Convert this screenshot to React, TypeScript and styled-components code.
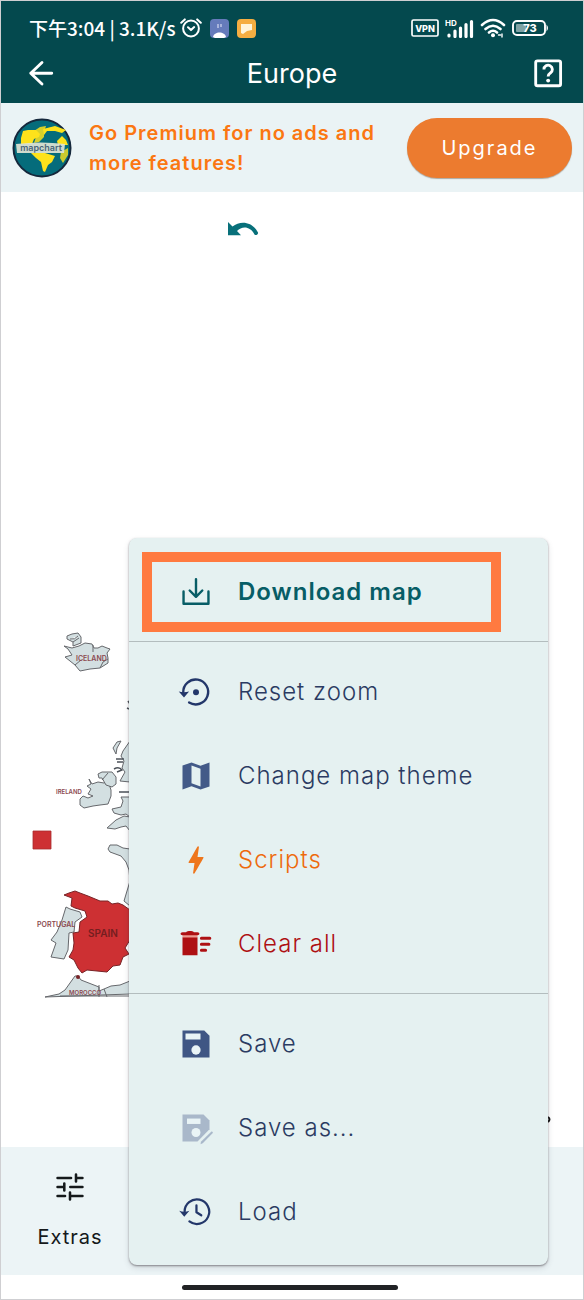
import React from "react";
import styled, { createGlobalStyle } from "styled-components";

const GlobalStyle = createGlobalStyle`
  *, *::before, *::after { box-sizing: border-box; }
  body {
    margin: 0;
    background: #fff;
    font-family: Inter, "Noto Sans CJK SC", sans-serif;
  }
  button { font: inherit; color: inherit; border: 0; background: none; padding: 0; cursor: pointer; }
  svg { display: block; flex: none; }
`;

const Screen = styled.div`
  position: relative;
  display: flex;
  flex-direction: column;
  min-height: 100vh;
  border: 1px solid #cfcfd2;
  background: #fff;
`;

const Header = styled.header`
  background: #04494e;
  color: #fff;
`;

const StatusBar = styled.div`
  display: flex;
  align-items: center;
  gap: 8px;
  height: 44px;
  padding: 10px 34px 0 28px;
`;

const StatusText = styled.span`
  font-family: "Noto Sans CJK SC", sans-serif;
  font-size: 19px;
  font-weight: 500;
  line-height: 24px;
  white-space: nowrap;
`;

const StatusGroup = styled.div<{ $gap: number; $end?: boolean }>`
  display: flex;
  align-items: center;
  gap: ${(p) => p.$gap}px;
  margin-left: ${(p) => (p.$end ? "auto" : "0")};
`;

const TitleBar = styled.div`
  display: grid;
  grid-template-columns: 1fr auto 1fr;
  align-items: center;
  height: 58px;
  padding: 0 17px;
`;

const Title = styled.h1`
  margin: 0;
  font-size: 27px;
  font-weight: 400;
  line-height: 32px;
`;

const IconButton = styled.button<{ $end?: boolean }>`
  justify-self: ${(p) => (p.$end ? "end" : "start")};
`;

const Promo = styled.section`
  display: flex;
  align-items: center;
  height: 89px;
  padding: 0 11px 0 10px;
  background: #eaf3f5;
`;

const PromoText = styled.p`
  flex: 1;
  margin: 0 16px;
  font-size: 20px;
  font-weight: 600;
  line-height: 30px;
  letter-spacing: 1px;
  color: #fb7712;
`;

const UpgradeButton = styled.button`
  && {
    width: 165px;
    height: 60px;
    border-radius: 30px;
    background: #ec7b2f;
    color: #fff;
    font-size: 20px;
    line-height: 24px;
    letter-spacing: 2px;
    box-shadow: 0 1px 1px rgba(80, 60, 40, 0.4);
  }
`;

const Canvas = styled.main`
  flex: 1;
  display: flex;
  flex-direction: column;
  justify-content: space-between;
`;

const CanvasTools = styled.div`
  padding: 29px 0 0 227px;
`;

const BottomBar = styled.nav`
  display: flex;
  height: 128px;
  background: #ecf4f6;
`;

const Tab = styled.button`
  && {
    display: flex;
    flex-direction: column;
    align-items: center;
    gap: 20px;
    width: 138px;
    padding-top: 22px;
    font-size: 20px;
    line-height: 24px;
    letter-spacing: 1px;
    color: #15191b;
  }
`;

const HomeArea = styled.div`
  display: flex;
  align-items: center;
  justify-content: center;
  height: 24px;
  padding-right: 4px;
`;

const HomeIndicator = styled.div`
  width: 216px;
  height: 5px;
  border-radius: 3px;
  background: #212225;
`;

const Menu = styled.div`
  position: absolute;
  left: 128px;
  right: 35px;
  bottom: 34px;
  border-radius: 8px;
  background: #e5f1f1;
  box-shadow: 0 1px 2px rgba(50, 40, 50, 0.5), 0 3px 6px rgba(50, 60, 70, 0.14);
`;

const MenuGroup = styled.div`
  padding: 8px 0 7px;
  & + & {
    border-top: 1px solid #b3bdbe;
  }
  &:last-child {
    padding-bottom: 11px;
  }
`;

const MenuItem = styled.button<{ $color: string; $strong?: boolean }>`
  && {
    display: flex;
    align-items: center;
    gap: 24px;
    width: 100%;
    height: 84px;
    padding-left: 49px;
    font-size: 24px;
    font-weight: ${(p) => (p.$strong ? 600 : 300)};
    line-height: 28px;
    letter-spacing: 1px;
    text-align: left;
    color: ${(p) => p.$color};
  }
`;

const HighlightedGroup = styled(MenuGroup)`
  padding: 14px 47px 9px 13px;
  ${MenuItem} {
    height: 80px;
    padding-left: 26px;
    border: 10px solid #ff7a40;
  }
`;

const Icon = ({ size = 36, children }: { size?: number; children: React.ReactNode }) => (
  <svg width={size} height={size} viewBox="0 0 24 24" fill="currentColor" aria-hidden="true">
    {children}
  </svg>
);

const stroke = {
  fill: "none",
  stroke: "currentColor",
  strokeLinecap: "round",
  strokeLinejoin: "round",
} as const;

const DownloadIcon = () => (
  <Icon>
    <path d="M3.7 11.6v8.2h16.6v-8.2M12 3.4v11.4M7.8 11l4.200 4.200 4.200-4.200" {...stroke} strokeWidth="1.6" />
  </Icon>
);

const ResetIcon = () => (
  <Icon>
    <g color="#23376a">
      <path d="M3.500 12.200A8.300 8.300 0 1 1 7.400 19" {...stroke} strokeWidth="1.6" />
      <path d="M.5 11.700q3.300 1 6.900 0L4 15.600z" fill="currentColor" />
      <circle cx="12" cy="12.200" r="2" fill="currentColor" />
    </g>
  </Icon>
);

const MapIcon = () => (
  <Icon>
    <path d="M21 3l-6 2.1L9 3 3 5v16l6-2.1 6 2.1 6-2V3zM15 19l-6-2.11V5l6 2.11V19z" fill="#435a88" />
  </Icon>
);

const BoltIcon = () => (
  <Icon>
    <path d="M11 21h-1l1-7H7.5c-.88 0-.33-.75-.31-.78C8.48 10.94 10.42 7.54 13.01 3h1l-1 7h3.51c.4 0 .62.19.4.66C12.97 17.55 11 21 11 21z" fill="#ee761c" />
  </Icon>
);

const ClearIcon = () => (
  <Icon>
    <path d="M3 6h10v2H3z" fill="#ec9c93" />
    <path d="M3 7.600h10V19.500H3zM3 4.200h2.4C6 3.400 7 3.400 8 3.400s2 0 2.600.8H13c1.700 0 1.700 2 0 2H3c-1.700 0-1.700-2 0-2z" />
    <path d="M15.600 8.200h5.600M15.600 12.200h5M15.600 16.200h2.800" {...stroke} strokeWidth="2" />
  </Icon>
);

const SaveIcon = () => (
  <Icon>
    <path d="M3 3h14.500L21 6.500V21H3z" fill="#3f5684" />
    <path d="M5 5h10v4H5z" fill="#e9f4f6" />
    <circle cx="12" cy="16" r="3.1" fill="#e9f4f6" />
  </Icon>
);

const SaveAsIcon = () => (
  <Icon>
    <g fill="#a9b8ca">
      <path d="M3 3h14l4 4v5.800L13 21H3z" />
      <path d="M15 22.800l.3-1.700 7-6.800q1.200-.2.900 1l-6.700 6.800z" />
    </g>
    <path d="M6 5.700h9v3.600H6z" fill="#e9f4f6" />
    <circle cx="12" cy="15" r="3" fill="#e9f4f6" />
  </Icon>
);

const HistoryIcon = () => (
  <Icon>
    <g color="#23376a">
      <path d="M4.400 11.900A8.200 8.200 0 1 1 7.600 18.300M12.300 7.600v4.600l3.200 2" {...stroke} strokeWidth="1.500" />
      <path d="M.8 11.200q3.300 1.400 6.800 0L4.200 15.200z" fill="currentColor" />
    </g>
  </Icon>
);

const TuneIcon = () => (
  <Icon>
    <path
      d="M3.700 6h9M16 3.700v4.600M16.500 6h3.800M3.700 12h4.300M8.200 9.700v4.600M12.200 12h8.100M3.700 18h5M12 15.700v4.600M12.500 18h7.800"
      {...stroke}
      strokeWidth="1.700"
    />
  </Icon>
);

const BackIcon = () => (
  <Icon>
    <path d="M8.500 11.500h14M16 4.300L8.500 11.500l7.500 7.200" {...stroke} strokeWidth="1.900" />
  </Icon>
);

const HelpIcon = () => (
  <Icon>
    <rect x="3.800" y="3.200" width="16.600" height="16.600" rx="1.200" {...stroke} strokeWidth="1.900" />
    <path d="M9.300 9a2.800 2.800 0 1 1 4.300 2.300c-1.100.8-1.500 1.200-1.500 2.300" {...stroke} strokeWidth="1.900" strokeLinecap="butt" />
    <circle cx="12.100" cy="16.400" r="1.300" />
  </Icon>
);

const AlarmIcon = () => (
  <svg width="22" height="20" viewBox="0 0 22 20" aria-hidden="true">
    <g {...stroke} strokeWidth="2">
      <circle cx="11" cy="10.500" r="7.900" />
      <path d="M8 9.300l3 2.800 3.200-3M1.200 4.800L4.800 1.400M20.800 4.800L17.200 1.400" />
    </g>
  </svg>
);

const ContactAppIcon = () => (
  <svg width="19" height="19" viewBox="0 0 19 19" aria-hidden="true">
    <rect width="19" height="19" rx="4" fill="#657bbb" />
    <path d="M3 18c1-6 12-6 13 0l-2 1H5z" fill="#fff" />
    <path d="M8 5v4M11 5v3" stroke="#c5cdea" strokeWidth="1.400" />
  </svg>
);

const NoteAppIcon = () => (
  <svg width="19" height="19" viewBox="0 0 19 19" aria-hidden="true">
    <rect width="19" height="19" rx="4" fill="#f5ae42" />
    <path d="M4 5h11v6l-5 1-4 3-2-1z" fill="#fff5db" />
  </svg>
);

const VpnIcon = () => (
  <svg width="28" height="18" viewBox="0 0 28 18" aria-hidden="true">
    <rect x="1" y="1" width="26" height="16" rx="1.500" {...stroke} strokeWidth="1.700" />
    <text x="14" y="12.500" textAnchor="middle" fontSize="9" fontWeight="800" fill="currentColor">VPN</text>
  </svg>
);

const SignalIcon = () => (
  <svg width="29" height="19" viewBox="0 0 29 19" aria-hidden="true">
    <text x="0" y="7" fontSize="8" fontWeight="700" fill="currentColor">HD</text>
    <path d="M4 16v1M10 12v5.500M15.500 9v8.500M21 5.500v12M26.500 2.500v15" {...stroke} strokeWidth="3.200" />
  </svg>
);

const WifiIcon = () => (
  <svg width="26" height="20" viewBox="0 0 26 20" aria-hidden="true">
    <g {...stroke} strokeWidth="2.600">
      <path d="M2 7q11-10 22 0M5.500 11q7.500-6.500 15 0M9 14.500q4-3.500 8 0" />
    </g>
    <circle cx="13" cy="17.300" r="2" fill="currentColor" />
    <path d="M18.500 17h2M22 16v3" {...stroke} strokeWidth="1.400" />
  </svg>
);

const BatteryIcon = () => (
  <svg width="37" height="18" viewBox="0 0 37 18" aria-hidden="true">
    <rect x="1" y="2" width="32" height="14" rx="4" {...stroke} strokeWidth="1.900" />
    <rect x="4" y="5" width="10" height="8" rx="1" fill="#7fa3a5" />
    <path d="M34.500 5.500q3 3.500 0 7z" fill="currentColor" />
    <text x="18" y="13" textAnchor="middle" fontSize="11" fontWeight="800" fill="currentColor">73</text>
  </svg>
);

const Logo = () => (
  <svg width="62" height="62" viewBox="0 0 62 62" role="img" aria-label="mapchart logo">
    <circle cx="31" cy="31" r="28.500" fill="#056c7b" stroke="#15283c" strokeWidth="2" />
    <g fill="#fde21b">
      <path d="M10 27l0-6 2-7 5-1 8 0 4 4-1 3-5 2-2 5z" />
      <path d="M23 14l6-4 6-1-2 6 0 5-5 5-5 1 2-6z" opacity=".85" />
      <path d="M32 12l12-3 11 4-4 3-7-2-8 0-3 4z" />
      <path d="M46 24l5-5 4 4 2 5-10 0z" />
      <path d="M20 36l14 0 10 3-3 6-4 3-3 7-2-1-2-9-5-4z" />
      <path d="M50 35l7-4 0 7-5 8-3-5z" opacity=".8" />
    </g>
    <path d="M5 27q25-3 49 0l-1 9H6z" fill="#dce2d3" opacity=".94" />
    <text x="30" y="34" textAnchor="middle" fontSize="9" fontWeight="600" fill="#4a6579">mapchart</text>
  </svg>
);

const UndoIcon = () => (
  <svg width="31" height="17" viewBox="0 0 31 17" aria-hidden="true">
    <path d="M0 1l4.500 4.500C12-.5 24 0 30 11.500c.6 2-2.500 3.500-3.500 2C22 5 14 5 9 10l4 4.300H0z" fill="#08707a" />
  </svg>
);

const MapLabel = styled.text<{ $dark?: boolean }>`
  font-family: Inter, sans-serif;
  font-weight: 600;
  fill: ${(p) => (p.$dark ? "#751e20" : "#8c4a50")};
`;

const MapDrawing = () => (
  <svg width="100%" height="527" viewBox="1 620 582 527" preserveAspectRatio="xMinYMin meet" role="img" aria-label="Map of Europe">
    <g fill="#d3dfe1" stroke="#66686c" strokeWidth="1" strokeLinejoin="round">
      <path d="M67 636l5-2 6-1 3 4v6l-8 3v-4l-6-3zM70 639q5 1 8-3M73 642l6-4" />
      <path d="M64 646l8 2 7-2 6-3 7 1 2 4 4 0 4-2 5 2 3 1-3 4 1 5 0 5-8 5-10 1-10 2-5-6-10-8 7-2-4-6zM93 645v7M100 668l3-6 5-3M75 665l6-5" />
      <path d="M113 748l4-6 4-1-4 7-1 6zM130 741l-7 10-2 5 3 5-2 7 3 4-5 9 10 1z" />
      <path d="M89 779l3 5 6-2 6 1 4-2 3 9 0 6-3 8-8 1-7 1-9 2-4-3 0-6 3-3 5 2 5-2-5-2 3-5-4-3 4-2z" />
      <path d="M98 774l4-2 10 0 4 5 0 7-4 3-6-2-4-7-3 0zM102 780l6-7" />
      <path d="M121 797h9v20l-4-3-5 1-7-2-2-4 9-2 2-6z" />
      <path d="M130 817v14l-4-5-5 1-6 2-8-1 9-8 8-4z" />
      <path d="M130 849l-7-1-6-3-7 0-2 4 2 3 11 4 5 6 3 8 1 11-6 20 6 5z" />
      <path d="M66 907l4 2 10 3 2 5-7 5-1 10-5 1-1 17-4 9-13-2 5-14-5-3 6-8 5-12z" />
      <path d="M45 997l14-3 6-4 10-14 3 0 3 4 18 7 0 4 5-2 7-3 9-1 10-4v13zM60 996h70M99 985v12M104 989l3 8" />
    </g>
    <path
      d="M64 895l5-2 6-2 5 2 8 3 12 5 8 0 4 3 6-1 5 2 7 5v30l-5 8 4 6-6 3-3 8-7 1-6 6-10-1-10-1-5 3-4-5-4-8-5-3 4-7 1-7-1-10 6-1 1-10 7-5-2-6-10-3-4-2 1-8z"
      fill="#cd3033"
      stroke="#782427"
    />
    <circle cx="78" cy="977" r="2" fill="#782427" />
    <path d="M33 831h18v18H33z" fill="#cd3033" stroke="#a82c2f" strokeWidth=".8" />
    <path d="M116 759h8M117 762h6M114 769q5-3 8 1l-5 2M119 792h10M128 701l2 3M127 708l2 1" fill="none" stroke="#4c5259" strokeWidth="1.500" />
    <path d="M548 1117q3 2 0 5" fill="none" stroke="#111" strokeWidth="2" />
    <MapLabel x="76" y="661" fontSize="7">ICELAND</MapLabel>
    <MapLabel x="56" y="794" fontSize="6">IRELAND</MapLabel>
    <MapLabel x="37" y="927" fontSize="7">PORTUGAL</MapLabel>
    <MapLabel x="88" y="937" fontSize="10" $dark>SPAIN</MapLabel>
    <MapLabel x="69" y="995" fontSize="6">MOROCCO</MapLabel>
  </svg>
);

const navy = "#2b3b62";

export default function App() {
  return (
    <>
      <GlobalStyle />
      <Screen>
        <Header>
          <StatusBar>
            <StatusGroup $gap={4}>
              <StatusText>下午3:04 | 3.1K/s</StatusText>
              <AlarmIcon />
            </StatusGroup>
            <StatusGroup $gap={8}>
              <ContactAppIcon />
              <NoteAppIcon />
            </StatusGroup>
            <StatusGroup $gap={6} $end>
              <VpnIcon />
              <SignalIcon />
              <WifiIcon />
              <BatteryIcon />
            </StatusGroup>
          </StatusBar>
          <TitleBar>
            <IconButton type="button" aria-label="Back"><BackIcon /></IconButton>
            <Title>Europe</Title>
            <IconButton type="button" aria-label="Help" $end><HelpIcon /></IconButton>
          </TitleBar>
        </Header>
        <Promo>
          <Logo />
          <PromoText>Go Premium for no ads and more features!</PromoText>
          <UpgradeButton type="button">Upgrade</UpgradeButton>
        </Promo>
        <Canvas>
          <CanvasTools>
            <button type="button" aria-label="Undo"><UndoIcon /></button>
          </CanvasTools>
          <MapDrawing />
        </Canvas>
        <BottomBar>
          <Tab type="button"><TuneIcon />Extras</Tab>
        </BottomBar>
        <HomeArea><HomeIndicator /></HomeArea>
        <Menu>
          <HighlightedGroup>
            <MenuItem type="button" $color="#075d66" $strong><DownloadIcon />Download map</MenuItem>
          </HighlightedGroup>
          <MenuGroup>
            <MenuItem type="button" $color={navy}><ResetIcon />Reset zoom</MenuItem>
            <MenuItem type="button" $color={navy}><MapIcon />Change map theme</MenuItem>
            <MenuItem type="button" $color="#ee6a0c"><BoltIcon />Scripts</MenuItem>
            <MenuItem type="button" $color="#ae1013"><ClearIcon />Clear all</MenuItem>
          </MenuGroup>
          <MenuGroup>
            <MenuItem type="button" $color={navy}><SaveIcon />Save</MenuItem>
            <MenuItem type="button" $color={navy}><SaveAsIcon />Save as...</MenuItem>
            <MenuItem type="button" $color={navy}><HistoryIcon />Load</MenuItem>
          </MenuGroup>
        </Menu>
      </Screen>
    </>
  );
}
